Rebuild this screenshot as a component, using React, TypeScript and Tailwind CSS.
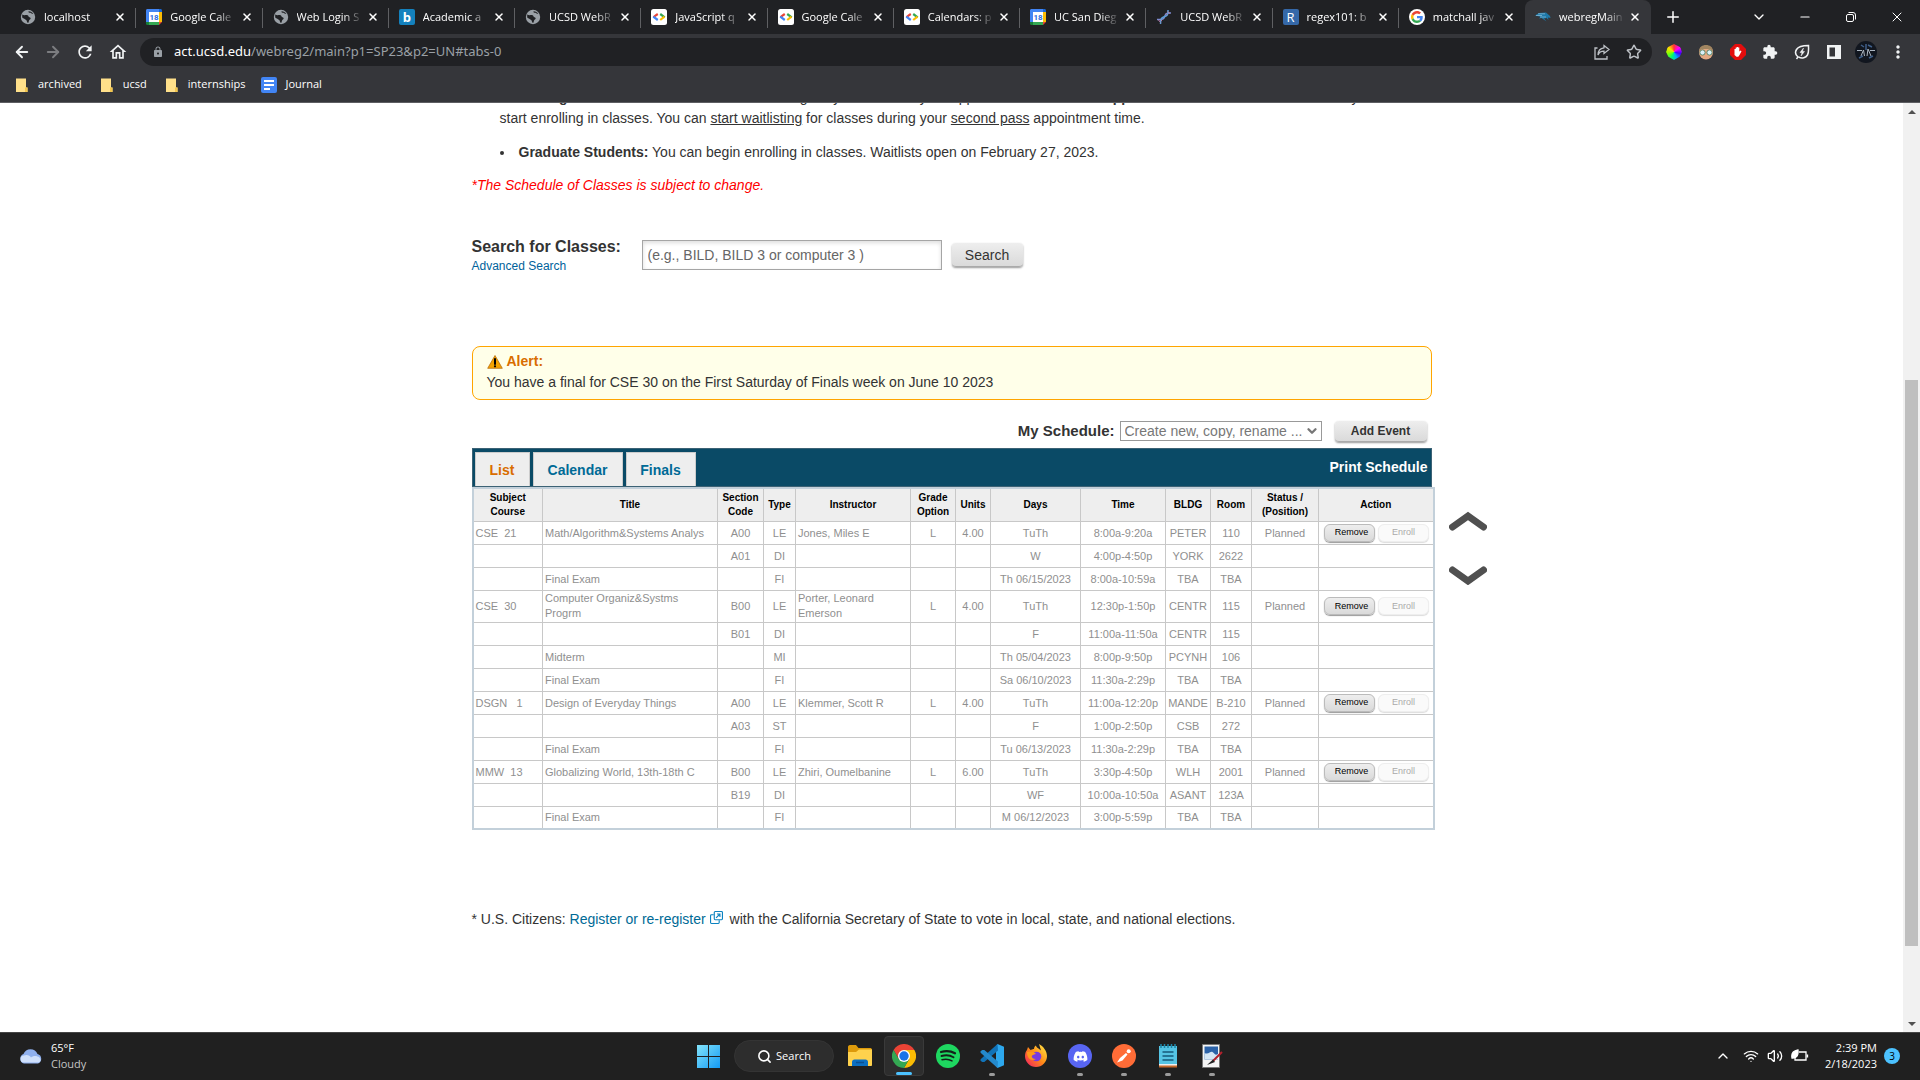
import React from "react";
import {
  ArrowLeft,
  ArrowRight,
  ChevronDown,
  ChevronUp,
  Minus,
  Plus,
  Search,
  Star,
  Volume2,
  Wifi,
  X,
} from "lucide-react";
import { MdExtension, MdLock, MdMoreVert, MdRefresh, MdOutlineHome } from "react-icons/md";
import { FaDiscord } from "react-icons/fa";

/* ---------- favicons ---------- */

const GlobeIcon = () => (
  <svg viewBox="0 0 16 16" className="size-4 shrink-0" aria-hidden="true">
    <circle cx="8" cy="8" r="7.2" fill="#9aa0a6" />
    <path d="M2.2 5.5C4 7 6 5.8 7.5 6.2S8 8 9.6 8.3c1.4.3 1.4 1.6.3 2.2-1.1.6-.7 1.9-1.7 3.4C6.700 14 7.200 11.600 6.200 11S3.500 9.500 2.200 8.600z" fill="#202124" />
    <path d="M8.600 2.200c-.6 1.2.6 1.400 1.800 1.600 1 .2 1.200 1.200 2.900 1.100C12.200 3.200 10.600 2.200 8.600 2.200z" fill="#202124" />
  </svg>
);

const CalendarIcon = () => (
  <svg viewBox="0 0 16 16" className="size-4 shrink-0" aria-hidden="true">
    <path d="M0 1.500C0 .600.600 0 1.500 0H13v3H3v10H0z" fill="#4285f4" />
    <path d="M13 0h1.500c.9 0 1.500.600 1.500 1.500V3h-3z" fill="#1967d2" />
    <path d="M13 3h3v10h-3z" fill="#fbbc04" />
    <path d="M3 13h10v3H3z" fill="#34a853" />
    <path d="M0 13h3v3H1.500A1.500 1.500 0 0 1 0 14.500z" fill="#188038" />
    <path d="M13 13h3l-3 3z" fill="#ea4335" />
    <path d="M3 3h10v10H3z" fill="#fff" />
    <text x="8" y="10.800" fontSize="8" fontWeight="700" textAnchor="middle" fill="#2a6be0" fontFamily="Roboto, sans-serif">18</text>
  </svg>
);

const LetterIcon = ({ box, letter }: { box: string; letter: string }) => (
  <span className={`flex size-4 shrink-0 items-center justify-center rounded-xs text-[13px] leading-none text-white ${box}`} aria-hidden="true">
    {letter}
  </span>
);

const DevIcon = () => (
  <svg viewBox="0 0 16 16" className="size-4 shrink-0" aria-hidden="true">
    <rect width="16" height="16" rx="2.500" fill="#fff" />
    <g fill="none" strokeWidth="2.200">
      <path d="M6.800 5L4.500 6.500 2.500 8.400" stroke="#ea4335" />
      <path d="M2.300 7.600L6.800 11" stroke="#4285f4" />
      <path d="M9.200 5l4.500 3.400" stroke="#34a853" />
      <path d="M13.500 7.600L9.200 11" stroke="#fbbc04" />
    </g>
  </svg>
);

const DnaIcon = () => (
  <svg viewBox="0 0 16 16" className="size-4 shrink-0" fill="none" aria-hidden="true">
    <path d="M1 10.500c4-.5 6.500 1 7.500-2.500s2-4.500 6.500-4" stroke="#7e8bd0" strokeWidth="1.500" />
    <path d="M4.500 15c.5-4-.5-6 3-7s5-2 4.500-7" stroke="#5c9ed6" strokeWidth="1.500" />
    <path d="M2.500 11l2 2.500M4.500 10.500l1.500 1.500M10 4.500l1.500 1.500M11.500 2.500l2.500 2" stroke="#b97ba8" />
  </svg>
);

const GoogleIcon = () => (
  <span className="flex size-4 shrink-0 items-center justify-center rounded-full bg-white">
    <svg viewBox="0 0 48 48" className="size-3" aria-hidden="true">
      <path fill="#EA4335" d="M24 9.500c3.540 0 6.710 1.220 9.210 3.600l6.850-6.850C35.900 2.380 30.470 0 24 0 14.620 0 6.510 5.380 2.560 13.220l7.980 6.190C12.430 13.720 17.740 9.500 24 9.500z" />
      <path fill="#4285F4" d="M46.980 24.550c0-1.570-.15-3.090-.38-4.550H24v9.020h12.940c-.58 2.960-2.260 5.480-4.780 7.180l7.730 6c4.510-4.180 7.090-10.360 7.090-17.650z" />
      <path fill="#FBBC05" d="M10.530 28.590c-.48-1.450-.76-2.990-.76-4.590s.27-3.140.76-4.590l-7.980-6.190C.92 16.460 0 20.120 0 24c0 3.880.92 7.540 2.560 10.780l7.970-6.190z" />
      <path fill="#34A853" d="M24 48c6.480 0 11.930-2.130 15.890-5.810l-7.730-6c-2.150 1.450-4.920 2.300-8.160 2.300-6.260 0-11.570-4.220-13.470-9.910l-7.980 6.190C6.510 42.620 14.620 48 24 48z" />
    </svg>
  </span>
);

const TritonIcon = () => (
  <svg viewBox="0 0 16 16" className="size-4 shrink-0" aria-hidden="true">
    <path d="M0 6.500L4 4l7-.5 4 3.500.5 2-2.500-.5.5 2.500-2-2L9 9.500l2.500 3L6.500 9 4 9.500l1.500-1.800z" fill="#1d78a8" />
    <path d="M1 6.500h6M3 4.800h7M5 8h6" stroke="#8fc1dc" strokeWidth=".7" />
  </svg>
);

type Tab = { title: string; icon: React.ReactNode };

const tabs: Tab[] = [
  { title: "localhost", icon: <GlobeIcon /> },
  { title: "Google Cale", icon: <CalendarIcon /> },
  { title: "Web Login S", icon: <GlobeIcon /> },
  { title: "Academic a", icon: <LetterIcon box="bg-[#1481bd] font-bold" letter="b" /> },
  { title: "UCSD WebR", icon: <GlobeIcon /> },
  { title: "JavaScript q", icon: <DevIcon /> },
  { title: "Google Cale", icon: <DevIcon /> },
  { title: "Calendars: p", icon: <DevIcon /> },
  { title: "UC San Dieg", icon: <CalendarIcon /> },
  { title: "UCSD WebR", icon: <DnaIcon /> },
  { title: "regex101: b", icon: <LetterIcon box="bg-[#3568a8]" letter="R" /> },
  { title: "matchall jav", icon: <GoogleIcon /> },
];

const TabLabel = ({ title, icon }: Tab) => (
  <>
    {icon}
    <span className="ml-2 w-[66px] mask-r-from-70% mask-r-to-100% text-[11px] whitespace-nowrap">{title}</span>
    <button aria-label={`Close ${title}`} className="ml-auto flex size-4 items-center justify-center">
      <X className="size-3" strokeWidth={3} />
    </button>
  </>
);

const TabStrip = () => (
  <div className="flex h-[34px] items-stretch bg-[#202124] pl-[10px] text-white">
    <div className="flex w-[1515px] min-w-0">
      {tabs.map((t, i) => (
        <div key={i} className="relative flex min-w-0 flex-1 items-center pr-2 pl-[10px]">
          <TabLabel {...t} />
          {i < tabs.length - 1 && <span className="absolute top-2 right-0 h-5 w-px bg-[#5f6063]" />}
        </div>
      ))}
    </div>
    <div className="flex w-[126px] shrink-0 items-center rounded-t-lg bg-[#35363a] pr-2 pl-[10px]">
      <TabLabel title="webregMain" icon={<TritonIcon />} />
    </div>
    <button aria-label="New tab" className="ml-[13px] flex items-center">
      <Plus className="size-[18px]" strokeWidth={2} />
    </button>
    <div className="ml-auto flex items-center">
      <button aria-label="Search tabs" className="flex w-[46px] items-center justify-center">
        <ChevronDown className="size-4" strokeWidth={2} />
      </button>
      <button aria-label="Minimize" className="flex w-[46px] items-center justify-center">
        <Minus size={14} strokeWidth={2} />
      </button>
      <button aria-label="Restore" className="flex w-[46px] items-center justify-center">
        <svg viewBox="0 0 10 10" className="size-[10px]" fill="none" stroke="#fff">
          <rect x=".5" y="2.500" width="7" height="7" rx="1.500" />
          <path d="M2.500.500h4.500a2.500 2.500 0 0 1 2.500 2.500v4.500" />
        </svg>
      </button>
      <button aria-label="Close window" className="flex w-[46px] items-center justify-center">
        <X className="size-4" strokeWidth={1.500} />
      </button>
    </div>
  </div>
);

const wheel = "bg-[conic-gradient(#f33,#f0f,#40f,#0af,#0f6,#8f0,#fd0,#f33)]";

const Toolbar = () => (
  <div className="flex h-9 items-center bg-[#35363a] pr-[14px] text-[#f1f3f4]">
    <div className="flex w-[140px] items-center justify-between pr-3 pl-[13px]">
      <button aria-label="Back"><ArrowLeft className="size-[18px]" strokeWidth={2.500} /></button>
      <button aria-label="Forward" className="text-[#7c7d80]"><ArrowRight className="size-[18px]" strokeWidth={2.500} /></button>
      <button aria-label="Reload"><MdRefresh className="size-5" /></button>
      <button aria-label="Home"><MdOutlineHome className="size-5" /></button>
    </div>
    <div className="flex h-7 flex-1 items-center rounded-full bg-[#202124] pr-[10px] pl-3">
      <MdLock className="size-3 text-[#9aa0a6]" />
      <div className="ml-[10px] flex-1 font-[Noto_Sans,sans-serif] text-[13px] text-[#9aa0a6]">
        <span className="text-white">act.ucsd.edu</span>/webreg2/main?p1=SP23&amp;p2=UN#tabs-0
      </div>
      <button aria-label="Share">
        <svg viewBox="0 0 16 16" className="size-4 text-[#bdc1c6]" fill="none" stroke="currentColor" strokeWidth="1.300">
          <path d="M3.500 4H1v11h12v-3" />
          <path d="M10 1.500l5 4-5 4V7.200C7 7.200 5 8.500 4 11c0-4 2-6.700 6-7.200z" />
        </svg>
      </button>
      <button aria-label="Bookmark" className="ml-4"><Star className="size-4 text-[#bdc1c6]" strokeWidth={2.200} /></button>
    </div>
    <div className="ml-[14px] flex items-center gap-4">
      <span className={`size-4 rounded-full [clip-path:polygon(50%_0,90%_20%,100%_50%,85%_80%,50%_100%,15%_80%,0_50%,10%_20%)] ${wheel}`} />
      <svg viewBox="0 0 16 16" className="size-4">
        <circle cx="8" cy="8.500" r="7" fill="#e3a983" />
        <path d="M1 7c0-8 14-8 14 0l-3-2H4z" fill="#a08560" />
        <g fill="#d9f1fa" stroke="#475" strokeWidth=".8"><circle cx="4.500" cy="8.500" r="2.600" /><circle cx="11.500" cy="8.500" r="2.600" /></g>
      </svg>
      <svg viewBox="0 0 16 16" className="size-4">
        <path d="M5 0h6l5 5v6l-5 5H5l-5-5V5z" fill="#e30d0d" />
        <path d="M4.500 8V5h1.200V3.500h1.200V3h1.200v.5h1.200V7.500l1.400-1 .8.8-2 3.700-1.200 1.800H6.500L4.500 11z" fill="#fff" />
      </svg>
      <MdExtension className="size-4" />
      <svg viewBox="0 0 16 16" className="size-4" fill="none" stroke="currentColor" strokeWidth="1.500">
        <path d="M2.500 15l1.500-2C1.500 11 1 8 2.500 5.500S7 1.500 14.500 1.500c0 4 .5 7-1 9.500S8 15 4.500 12.800" />
        <path d="M9.500 4L6 8.500h2L7 12l3.500-4.500h-2z" fill="currentColor" strokeWidth=".5" />
      </svg>
      <svg viewBox="0 0 16 16" className="size-4"><path d="M1 1h14v14H1z M3.500 3.500v9H9v-9z" fill="currentColor" fillRule="evenodd" /></svg>
      <svg viewBox="0 0 22 22" className="-mx-[3px] size-[22px]">
        <circle cx="11" cy="11" r="11" fill="#11161f" />
        <path d="M2 9.500h5M15 9.500h5M6 15l2.500-6 1 6M12 15l1-7 3 7" stroke="#aab4bf" fill="none" />
        <path d="M4 17l4-2M14 17l4-2M6 4l3 2M13 4l4 2M11 3v6" stroke="#3f5f8a" strokeWidth="1.500" fill="none" />
      </svg>
      <MdMoreVert className="-mx-[2px] size-5" />
    </div>
  </div>
);

const FolderIcon = () => (
  <svg viewBox="0 0 16 16" className="size-4" aria-hidden="true">
    <path d="M2 1.500h10v9h1.500V15H2z" fill="#ffe08a" />
    <path d="M11 10.500h2.500V15H11z" fill="#f3c64e" />
  </svg>
);

const Bookmarks = () => (
  <nav className="flex h-[33px] items-center border-b border-[#5d5e62] bg-[#35363a] pb-[3px] pl-[14px] text-[11px] text-white">
    <a href="#archived" className="flex items-center gap-2"><FolderIcon />archived</a>
    <a href="#ucsd" className="ml-[17px] flex items-center gap-2"><FolderIcon />ucsd</a>
    <a href="#internships" className="ml-[17px] flex items-center gap-2"><FolderIcon />internships</a>
    <a href="#journal" className="ml-4 flex items-center gap-2">
      <svg viewBox="0 0 16 16" className="size-4"><rect width="16" height="16" rx="2" fill="#4285f4" /><path d="M3 4h10M3 8h10M3 12h6" stroke="#fff" strokeWidth="2" /></svg>
      Journal
    </a>
  </nav>
);

/* ---------- schedule ---------- */

type Row = {
  course?: string; title?: string; section?: string; type: string; instructor?: string;
  grade?: string; units?: string; days: string; time: string; bldg: string; room: string; status?: string;
};

const rows: Row[] = [
  { course: "CSE  21", title: "Math/Algorithm&Systems Analys", section: "A00", type: "LE", instructor: "Jones, Miles E", grade: "L", units: "4.00", days: "TuTh", time: "8:00a-9:20a", bldg: "PETER", room: "110", status: "Planned" },
  { section: "A01", type: "DI", days: "W", time: "4:00p-4:50p", bldg: "YORK", room: "2622" },
  { title: "Final Exam", type: "FI", days: "Th 06/15/2023", time: "8:00a-10:59a", bldg: "TBA", room: "TBA" },
  { course: "CSE  30", title: "Computer Organiz&Systms Progrm", section: "B00", type: "LE", instructor: "Porter, Leonard Emerson", grade: "L", units: "4.00", days: "TuTh", time: "12:30p-1:50p", bldg: "CENTR", room: "115", status: "Planned" },
  { section: "B01", type: "DI", days: "F", time: "11:00a-11:50a", bldg: "CENTR", room: "115" },
  { title: "Midterm", type: "MI", days: "Th 05/04/2023", time: "8:00p-9:50p", bldg: "PCYNH", room: "106" },
  { title: "Final Exam", type: "FI", days: "Sa 06/10/2023", time: "11:30a-2:29p", bldg: "TBA", room: "TBA" },
  { course: "DSGN   1", title: "Design of Everyday Things", section: "A00", type: "LE", instructor: "Klemmer, Scott R", grade: "L", units: "4.00", days: "TuTh", time: "11:00a-12:20p", bldg: "MANDE", room: "B-210", status: "Planned" },
  { section: "A03", type: "ST", days: "F", time: "1:00p-2:50p", bldg: "CSB", room: "272" },
  { title: "Final Exam", type: "FI", days: "Tu 06/13/2023", time: "11:30a-2:29p", bldg: "TBA", room: "TBA" },
  { course: "MMW  13", title: "Globalizing World, 13th-18th C", section: "B00", type: "LE", instructor: "Zhiri, Oumelbanine", grade: "L", units: "6.00", days: "TuTh", time: "3:30p-4:50p", bldg: "WLH", room: "2001", status: "Planned" },
  { section: "B19", type: "DI", days: "WF", time: "10:00a-10:50a", bldg: "ASANT", room: "123A" },
  { title: "Final Exam", type: "FI", days: "M 06/12/2023", time: "3:00p-5:59p", bldg: "TBA", room: "TBA" },
];

const heads: [string, string][] = [
  ["Subject Course", "w-[70px]"], ["Title", "w-[175px]"], ["Section Code", "w-[46px]"], ["Type", "w-8"],
  ["Instructor", "w-[115px]"], ["Grade Option", "w-[45px]"], ["Units", "w-[35px]"], ["Days", "w-[90px]"],
  ["Time", "w-[85px]"], ["BLDG", "w-[45px]"], ["Room", "w-[41px]"], ["Status / (Position)", "w-[67px]"], ["Action", "w-[115px]"],
];

const cell = "border border-[#c8c8c8] p-0 text-center";
const left = "border border-[#c8c8c8] py-0 pr-0 pl-[2px] text-left";
const grayButton = "rounded border-b border-[#aaa] bg-linear-to-b from-[#eee] to-[#dadada] text-[#333] shadow-[0_1px_2px_#999]";

const ScheduleTable = () => (
  <table className="w-[calc(100%+2px)] table-fixed border-collapse border-2 border-[#c3d0da]">
    <colgroup>{heads.map(([h, w]) => <col key={h} className={w} />)}</colgroup>
    <thead>
      <tr className="h-[33px] bg-[#eee] text-[10px] leading-[14px] text-black">
        {heads.map(([h]) => <th key={h} className="border border-[#c8c8c8] p-0 px-1 font-bold">{h}</th>)}
      </tr>
    </thead>
    <tbody className="text-[11px] leading-4 text-[#8f8f8f]">
      {rows.map((r, i) => (
        <tr key={i} className={r.title?.startsWith("Computer") ? "h-8 leading-[15px]" : "h-[23px]"}>
          <td className={`${left} whitespace-pre`}>{r.course}</td>
          <td className={left}>{r.title}</td>
          <td className={cell}>{r.section}</td>
          <td className={cell}>{r.type}</td>
          <td className={left}>{r.instructor}</td>
          <td className={cell}>{r.grade}</td>
          <td className={cell}>{r.units}</td>
          <td className={cell}>{r.days}</td>
          <td className={cell}>{r.time}</td>
          <td className={cell}>{r.bldg}</td>
          <td className={cell}>{r.room}</td>
          <td className={cell}>{r.status}</td>
          <td className={cell}>
            {r.status && (
              <div className="flex h-[18px] items-stretch gap-[3px] pl-[5px] text-[9px] leading-none">
                <button className="w-[51px] rounded-md border border-[#bbb] bg-linear-to-b from-[#eee] to-[#dadada] pl-1 text-black shadow-[0_1px_1px_#999]">Remove</button>
                <button disabled className="w-[51px] rounded-md border border-[#eee] bg-[#fafafa] text-[#aaa] shadow-[0_1px_1px_#ddd]">Enroll</button>
              </div>
            )}
          </td>
        </tr>
      ))}
    </tbody>
  </table>
);

const WarningIcon = () => (
  <svg viewBox="0 0 16 14" className="h-[14px] w-4" aria-hidden="true">
    <path d="M8 .500l7.300 12.800H.700z" fill="#f5a300" stroke="#b86e12" strokeWidth=".8" strokeLinejoin="round" />
    <path d="M8 4v5" stroke="#000" strokeWidth="2" strokeLinecap="round" />
    <circle cx="8" cy="11.300" r="1.100" fill="#000" />
  </svg>
);

const tabButton = "h-[34px] border border-b-0 border-[#ccc] bg-[#eee] text-center";

const Page = () => (
  <div className="flex min-h-0 flex-1 bg-white font-[Liberation_Sans,Arial,sans-serif] text-sm text-[#333]">
    <main className="min-w-0 flex-1 overflow-hidden">
      <div className="mx-auto w-full max-w-[960px]">
        <ul className="-mt-4 list-disc pl-7 leading-[21px]">
          <li className="list-inside">
            <b>Undergraduate Students:</b> Check on WebReg daily to check on your appointment times. Your <b>appointment time</b> is the date and time you can
            <br />
            start enrolling in classes. You can <u>start waitlisting</u> for classes during your <u>second pass</u> appointment time.
          </li>
          <li className="mt-[13px] list-inside"><b>Graduate Students:</b> You can begin enrolling in classes. Waitlists open on February 27, 2023.</li>
        </ul>
        <p className="mt-3 leading-[21px] text-[#f00] italic">*The Schedule of Classes is subject to change.</p>

        <form className="mt-[42px] flex items-start" onSubmit={(e) => e.preventDefault()}>
          <div className="w-[170px]">
            <label htmlFor="search" className="block text-base leading-[18px] font-bold">Search for Classes:</label>
            <a href="#advanced" className="block text-xs leading-5 text-[#00629b]">Advanced Search</a>
          </div>
          <input
            id="search"
            type="text"
            placeholder="(e.g., BILD, BILD 3 or computer 3 )"
            className="mt-[2px] h-[30px] w-[300px] border border-[#a5a5a5] px-[5px] text-sm shadow-[inset_0_2px_4px_#ddd] placeholder:text-[#666]"
          />
          <button type="submit" className={`mt-[5px] ml-[10px] h-6 w-[71px] text-sm ${grayButton}`}>Search</button>
        </form>

        <section className="mt-[70px] h-[54px] rounded-lg border border-[#ffa500] bg-[#ffffe9] px-[14px] pt-1">
          <h2 className="flex items-center gap-1 leading-[21px] font-bold text-[#d96d00]"><WarningIcon />Alert:</h2>
          <p className="leading-[21px]">You have a final for CSE 30 on the First Saturday of Finals week on June 10 2023</p>
        </section>

        <div className="mt-[21px] flex h-[27px] items-start justify-end pr-[5px]">
          <label htmlFor="schedule" className="text-[15px] leading-5 font-bold">My Schedule:</label>
          <span className="relative ml-[5px]">
            <select id="schedule" className="block h-5 w-[202px] appearance-none border border-[#999] bg-white pl-1 text-sm leading-none text-[#777]">
              <option>Create new, copy, rename ...</option>
            </select>
            <ChevronDown className="pointer-events-none absolute top-[3px] right-[3px] size-[14px] text-[#777]" strokeWidth={4} />
          </span>
          <button className={`ml-[13px] h-[21px] w-[92px] text-xs font-bold ${grayButton}`}>Add Event</button>
        </div>

        <div className="relative">
          <div className="flex h-[39px] items-end justify-between border border-[#3c6275] bg-[#0a4a66] pr-[3px] pl-[2px]">
            <div role="tablist" className="flex gap-[3px] text-sm font-bold">
              <button role="tab" aria-selected="true" className={`w-[55px] text-[#d96d00] ${tabButton}`}>List</button>
              <button role="tab" aria-selected="false" className={`w-[90px] text-[#006a96] ${tabButton}`}>Calendar</button>
              <button role="tab" aria-selected="false" className={`w-[70px] text-[#006a96] ${tabButton}`}>Finals</button>
            </div>
            <a href="#print" className="self-center pb-px font-bold text-white">Print Schedule</a>
          </div>
          <ScheduleTable />
          <div className="absolute top-[63px] left-full ml-[17px] flex flex-col gap-[34px]">
            {["M3.500 16L19 5l15.500 11", "M3.500 5L19 16 34.500 5"].map((d, i) => (
              <button key={d} aria-label={i ? "Scroll down" : "Scroll up"}>
                <svg viewBox="0 0 38 20" className="h-5 w-[38px]" fill="none" stroke="#505050" strokeWidth="7" strokeLinecap="round"><path d={d} /></svg>
              </button>
            ))}
          </div>
        </div>

        <p className="mt-[79px] leading-[21px]">
          * U.S. Citizens:{" "}
          <a href="#register" className="text-[#006a96]">
            Register or re-register
            <svg viewBox="0 0 14 14" className="mr-[3px] mb-[6px] ml-1 inline size-[13px]" fill="none" stroke="#0b82c0" strokeWidth="1.200">
              <rect x="4.600" y=".600" width="8.800" height="8.800" rx="1" />
              <path d="M4 4H1.500C1 4 .600 4.500.600 5v7.500c0 .5.500.900.900.900H9c.5 0 .900-.4.900-.9V10M6.500 7.500l4-4M7.500 3.300h3.200v3.200" />
            </svg>
          </a>{" "}
          with the California Secretary of State to vote in local, state, and national elections.
        </p>
      </div>
    </main>
    <div className="flex w-[17px] flex-col items-center bg-[#f1f1f1]" aria-hidden="true">
      <span className="flex h-[17px] items-center"><span className="border-x-4 border-b-4 border-x-transparent border-b-[#505050]" /></span>
      <span className="grow-[260]" />
      <span className="w-[13px] grow-[566] bg-[#bfbfbf]" />
      <span className="grow-[69]" />
      <span className="flex h-[17px] items-center"><span className="border-x-4 border-t-4 border-x-transparent border-t-[#505050]" /></span>
    </div>
  </div>
);

/* ---------- taskbar ---------- */

const ExplorerIcon = () => (
  <svg viewBox="0 0 24 24" className="size-6">
    <path d="M0 3c0-1 .7-2 2-2h6l2.500 3H22c1 0 2 .5 2 2v6H0z" fill="#dd9a0b" />
    <path d="M0 8h8l3-2.500h13V21c0 .6-.5 1-1 1H1c-.6 0-1-.4-1-1z" fill="#ffd24d" />
    <path d="M4 22v-4c0-1.500 1-2.500 2.500-2.500h11c1.500 0 2.500 1 2.500 2.500v4z" fill="#0b6fc2" />
    <path d="M8 18.500h8" stroke="#0a4f91" strokeWidth="1.500" />
  </svg>
);
const ChromeIcon = () => (
  <svg viewBox="0 0 24 24" className="size-6">
    <path d="M12 6h10.400a12 12 0 0 1-10.400 18l5.200-9z" fill="#fbbc04" />
    <path d="M1.600 6A12 12 0 0 1 22.400 6H12L6.800 15z" fill="#ea4335" />
    <path d="M1.600 6l5.200 9L12 18l5.200-3L12 24A12 12 0 0 1 1.600 6z" fill="#34a853" />
    <circle cx="12" cy="12" r="6" fill="#fff" /><circle cx="12" cy="12" r="4.700" fill="#1a73e8" />
  </svg>
);
const SpotifyIcon = () => (
  <svg viewBox="0 0 24 24" className="size-6">
    <circle cx="12" cy="12" r="12" fill="#1ed760" />
    <g fill="none" stroke="#14201a" strokeLinecap="round"><path d="M5 8c5-1.500 10-1 14 1.300" strokeWidth="2.200" /><path d="M5.500 12c4.500-1.200 8.500-.8 12 1.200" strokeWidth="1.900" /><path d="M6 15.700c4-.9 7-.6 10 1.200" strokeWidth="1.500" /></g>
  </svg>
);
const CodeIcon = () => (
  <svg viewBox="0 0 24 24" className="size-6">
    <path d="M17.500 0L24 2.800v18.400L17.500 24 16 22V2z" fill="#2da8ee" />
    <path d="M17.500 0L.600 15.300l-.1 1.400L2.300 18l2 .1L18 6.500z" fill="#1173b8" />
    <path d="M17.500 24L.600 8.700l-.1-1.400L2.300 6l2-.1L18 17.500z" fill="#2489cc" />
  </svg>
);
const FirefoxIcon = () => (
  <svg viewBox="0 0 24 24" className="size-6">
    <defs><linearGradient id="ff" x1="1" y1="0" x2="0" y2="1"><stop offset="0" stopColor="#fff14a" /><stop offset=".5" stopColor="#ff8a16" /><stop offset="1" stopColor="#f5156c" /></linearGradient></defs>
    <path d="M3 6l1-3 2.500 3C9 5 9 5 10 5c0-2 1-3 2-3.500 0 2 3 3 5 5L15 0c4 2 8 7 8 12a11 11 0 1 1-22 0c0-3 1-5 2-6z" fill="url(#ff)" />
    <circle cx="12.500" cy="12.500" r="4.800" fill="#7a3be0" />
    <path d="M3 8c3-1 7-1 9 2-2 0-3 1-4.500 2C8 14 9 15 12 15c-5 3-9-1-9-7z" fill="#ff9a1a" />
  </svg>
);
const DiscordIcon = () => (
  <span className="flex size-6 items-center justify-center rounded-full bg-[#5865f2]"><FaDiscord className="size-[15px] text-white" /></span>
);
const PostmanIcon = () => (
  <svg viewBox="0 0 24 24" className="size-6">
    <circle cx="12" cy="12" r="12" fill="#ff6c37" />
    <path d="M5 18.500l3-4.500 6-5 1.500 1.500-5 6z" fill="#fff" /><circle cx="16.700" cy="7.300" r="2" fill="#fff" />
  </svg>
);
const NotepadIcon = () => (
  <svg viewBox="0 0 24 24" className="size-6">
    <path d="M3 2h18v20H3z" fill="#55c4e4" /><path d="M3 21h18v2.500H3z" fill="#c5682a" /><path d="M3 20h18v1.500H3z" fill="#eee" />
    <path d="M6.500 8h11M6.500 12h11M6.500 16h11" stroke="#14587a" strokeWidth="1.500" />
    <path d="M5 0v4M8.500 0v4M12 0v4M15.500 0v4M19 0v4" stroke="#1c86a8" strokeWidth="1.500" />
  </svg>
);
const PaintIcon = () => (
  <svg viewBox="0 0 24 24" className="size-6">
    <path d="M2.500.500h17v23h-17z" fill="#f4f4f4" stroke="#777" /><path d="M4.500 2.500h13.500v13H4.500z" fill="#2b62a8" />
    <path d="M4.500 9c4 2 6-2 8-1s2 4 5.500 2v5.500H4.500z" fill="#d4e6f5" />
    <path d="M22 8l-9 9" stroke="#b3202c" strokeWidth="2" /><path d="M13 15.500l-6 5.500 8-3z" fill="#222" />
  </svg>
);

const idle = "w-[6px] bg-[#9b9b9b]";
const apps: { name: string; icon: React.ReactNode; mark?: string }[] = [
  { name: "File Explorer", icon: <ExplorerIcon /> },
  { name: "Chrome", icon: <ChromeIcon />, mark: "w-4 bg-[#4cc2ff]" },
  { name: "Spotify", icon: <SpotifyIcon /> },
  { name: "Code", icon: <CodeIcon />, mark: idle },
  { name: "Firefox", icon: <FirefoxIcon /> },
  { name: "Discord", icon: <DiscordIcon />, mark: idle },
  { name: "Postman", icon: <PostmanIcon />, mark: idle },
  { name: "Notepad", icon: <NotepadIcon />, mark: idle },
  { name: "Image viewer", icon: <PaintIcon />, mark: idle },
];

const Taskbar = () => (
  <footer className="grid h-12 grid-cols-[1fr_auto_1fr] items-center border-t border-[#454545] bg-[#202020] pb-px text-[11px] text-white">
    <div className="flex items-center gap-2 pl-[19px]">
      <svg viewBox="0 0 24 16" className="h-4 w-6">
        <path d="M5 15.500a5 5 0 0 1-.5-9.500A7.500 7.500 0 0 1 18.500 6 5 5 0 0 1 19 15.500z" fill="#8fb0ee" />
        <path d="M5 14.500a3.500 3.500 0 0 1 0-7c3-1.500 6 0 7 2 2-2 6-2 8.500 0 2 2.500 1 5-1.500 5z" fill="#cfe0fb" />
      </svg>
      <div className="leading-4"><div>65°F</div><div className="text-[#c5c5c5]">Cloudy</div></div>
    </div>
    <div className="flex items-center">
      <button aria-label="Start" className="flex w-11 justify-center">
        <svg viewBox="0 0 23 23" className="size-[23px]">
          <defs><linearGradient id="win" x1="0" y1="0" x2="1" y2="1"><stop offset="0" stopColor="#83e4fb" /><stop offset="1" stopColor="#139af5" /></linearGradient></defs>
          <path d="M0 0h11v11H0zM12 0h11v11H12zM0 12h11v11H0zM12 12h11v11H12z" fill="url(#win)" />
        </svg>
      </button>
      <button className="mx-1 flex h-8 w-[100px] items-center justify-center gap-1 rounded-full border border-[#343434] bg-[#2d2d2d]">
        <Search className="size-[15px]" strokeWidth={2.500} />Search
      </button>
      {apps.map((a) => (
        <button key={a.name} aria-label={a.name} className="flex h-11 w-11 items-center justify-center">
          <span className={a.name === "Chrome" ? "relative flex size-10 items-center justify-center rounded border border-[#3a3a3a] bg-[#2d2d2d]" : "relative flex size-10 items-center justify-center"}>
            {a.icon}
            {a.mark && <span className={`absolute bottom-0 h-[3px] rounded-full ${a.mark}`} />}
          </span>
        </button>
      ))}
    </div>
    <div className="flex items-center justify-end pr-5">
      <ChevronUp className="size-4" strokeWidth={2} />
      <Wifi className="ml-3 size-4" strokeWidth={2} />
      <Volume2 className="ml-2 size-4" strokeWidth={2} />
      <svg viewBox="0 0 18 14" className="ml-2 h-[14px] w-[18px]" fill="none" stroke="#fff" strokeWidth="1.300">
        <path d="M8 3h7v8H4V9M16.500 5.500v3" /><path d="M1 9c-1-5 1-7 6-8 .5 5-1 8-5 8z" fill="#fff" />
      </svg>
      <div className="ml-4 text-right leading-4"><div>2:39 PM</div><div>2/18/2023</div></div>
      <span className="ml-[7px] flex size-4 items-center justify-center rounded-full bg-[#4cc2ff] text-[10px] leading-none text-black">3</span>
    </div>
  </footer>
);

export default function App() {
  return (
    <div className="flex h-screen flex-col overflow-hidden font-[Open_Sans,Noto_Sans,sans-serif]">
      <TabStrip />
      <Toolbar />
      <Bookmarks />
      <Page />
      <Taskbar />
    </div>
  );
}
